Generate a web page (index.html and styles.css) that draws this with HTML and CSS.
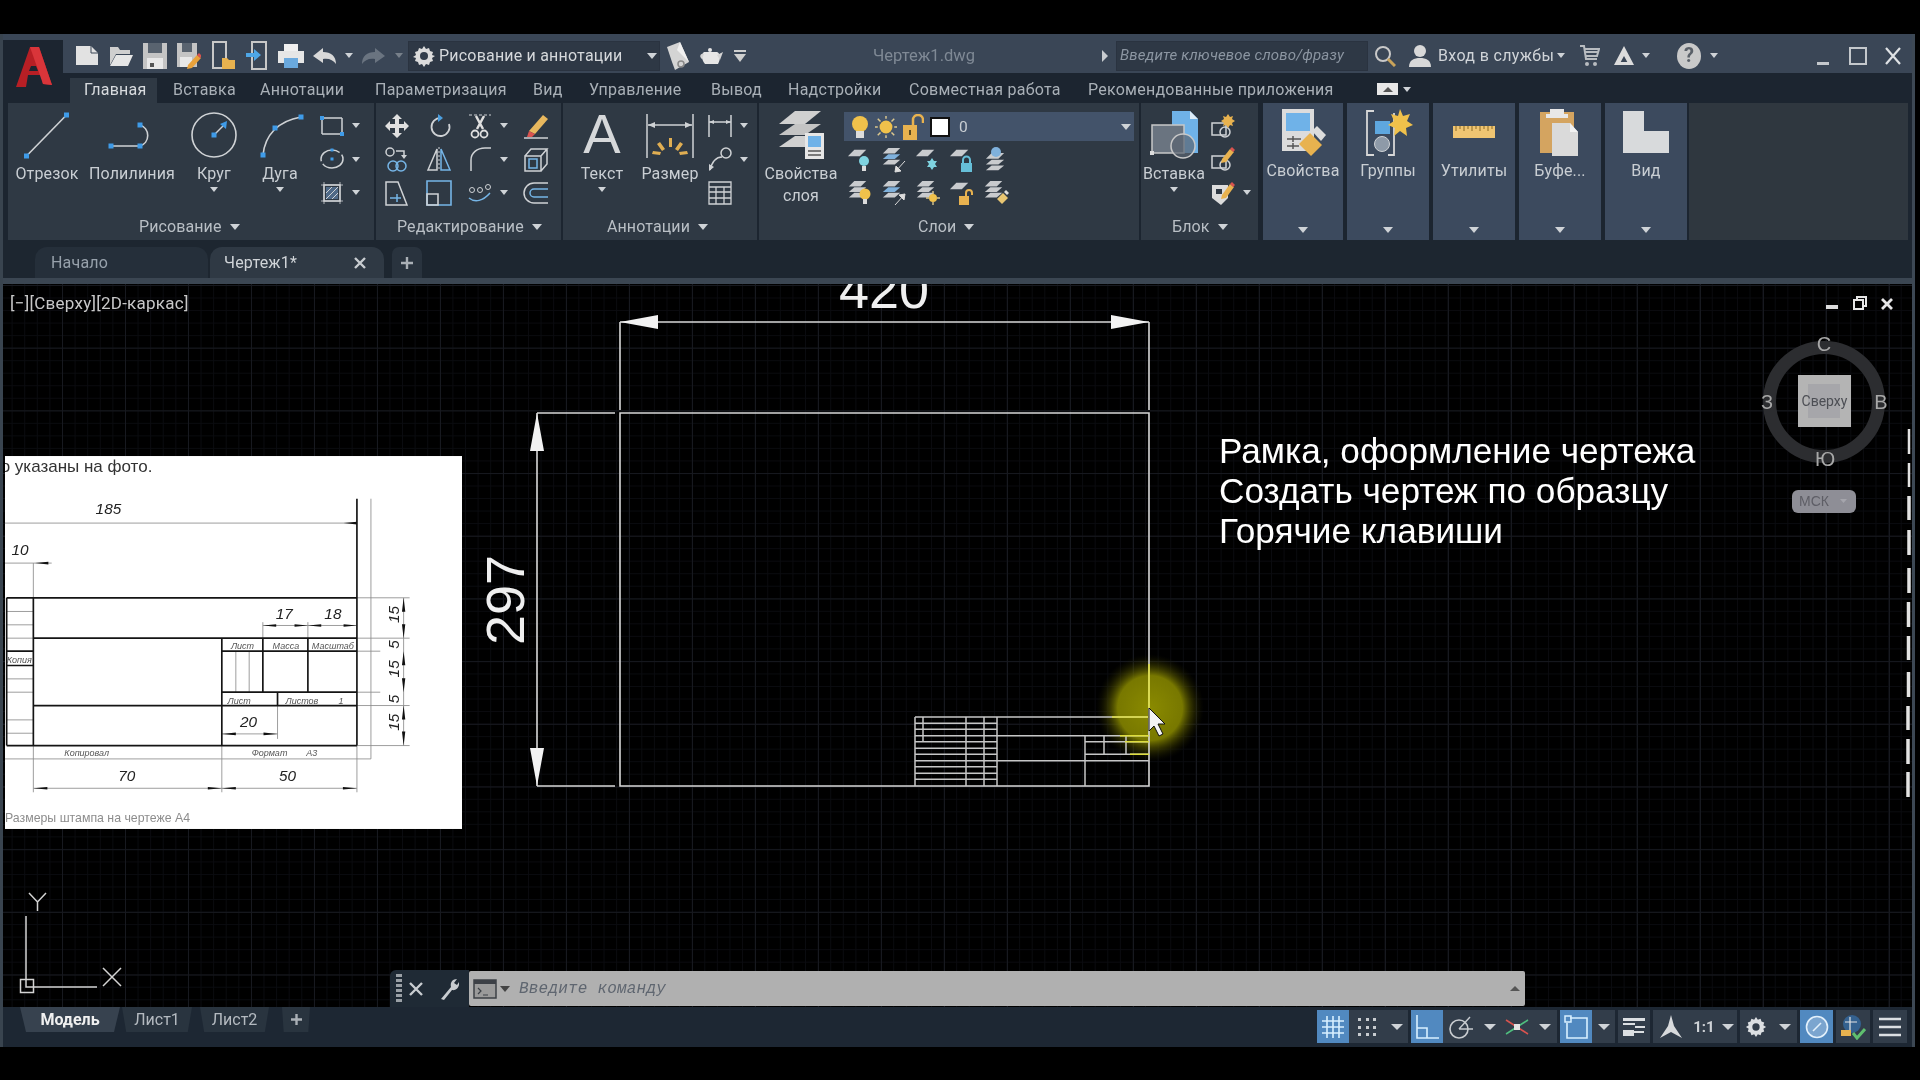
FILE: index.html
```html
<!DOCTYPE html>
<html lang="ru">
<head>
<meta charset="utf-8">
<title>Чертеж1.dwg</title>
<link rel="stylesheet" href="styles.css">
</head>
<body>
<svg class="defs" aria-hidden="true">
  <symbol id="lyr" viewBox="0 0 24 24"><path d="M8 3h13l-7 7H1z" fill="#c9cbce"/></symbol>
  <symbol id="stk" viewBox="0 0 24 24"><path d="M8 1h13l-6 6H2z" fill="#c9cbce"/><path d="M8 8h13l-6 5H2z" fill="#c9cbce"/><path d="M8 14h13l-6 5H2z" fill="#c9cbce"/></symbol>
  <symbol id="stkb" viewBox="0 0 24 24"><path d="M8 1h13l-6 6H2z" fill="#c9cbce"/><path d="M8 8h13l-6 5H2z" fill="#7fb1dc"/><path d="M8 14h13l-6 5H2z" fill="#c9cbce"/></symbol>
</svg>

<div class="bar-black top-gap"></div>
<main class="window">

  <div class="top">
    <div class="logo">
      <svg width="38" height="42" viewBox="0 0 38 42"><path d="M1 41 15 1h9l13 38-9-1-2-9H13l-2 12z" fill="#b71f25"/><path d="M15 1h9l13 38-9-1z" fill="#d9353a"/><path d="M16 20h5l2 5h-9z" fill="#1c2530"/></svg>
    </div>
    <div class="top-right">
      <header class="titlebar">
        <div class="c w34"><svg width="24" height="24" viewBox="0 0 24 24"><path d="M1 2h15l7 7v12H1z" fill="#e2e2e2"/><path d="M16 2v7h7" fill="none" stroke="#3a4656"/></svg></div>
        <div class="c w34"><svg width="26" height="24" viewBox="0 0 26 24"><path d="M2 3h8l2 3h10v4H8L2 21z" fill="#cfcfcf"/><path d="M8 11h17l-5 11H2z" fill="#e6e6e6"/></svg></div>
        <div class="c w34"><svg width="24" height="28" viewBox="0 0 24 28"><path d="M0 1h24v26H0z" fill="#c4c4c4"/><path d="M5 1h14v10H5z" fill="#59636f"/><path d="M4 16h16v11H4z" fill="#e8e8e8"/><path d="M7 21h4v4H7z" fill="#555"/></svg></div>
        <div class="c w34"><svg width="24" height="28" viewBox="0 0 24 28"><path d="M0 1h20v24H0z" fill="#c4c4c4"/><path d="M5 1h10v9H5z" fill="#59636f"/><path d="M3 15h12v10H3z" fill="#e8e8e8"/><path d="M11 23l9-10 4 3-9 10-5 1z" fill="#e9a23b"/><path d="M20 13l2-2 3 3-2 2z" fill="#d9534f"/></svg></div>
        <div class="c w34"><svg width="24" height="30" viewBox="0 0 24 30"><path d="M2 1h13v26H2z" fill="none" stroke="#c8c8c8" stroke-width="2"/><path d="M11 17h5l2 2h6v9H11z" fill="#e8b24f"/></svg></div>
        <div class="c w34"><svg width="24" height="30" viewBox="0 0 24 30"><path d="M7 1h14v27H7z" fill="none" stroke="#c8c8c8" stroke-width="2"/><path d="M1 12h8V8l7 6-7 6v-4H1z" fill="#4ea6e6"/></svg></div>
        <div class="c w34"><svg width="26" height="26" viewBox="0 0 26 26"><path d="M6 1h14v7H6z" fill="#f0f0f0"/><path d="M0 8h26v12H0z" fill="#e6e6e6"/><path d="M6 15h14v10H6z" fill="#6aa9de"/></svg></div>
        <div class="c w34"><svg width="24" height="18" viewBox="0 0 24 18"><path d="M10 1 0 9l10 7v-4c6-1 10 1 13 5 0-8-5-12-13-12z" fill="#d8d8d8"/></svg></div>
        <div class="c w14"><i class="dd dd-s"></i></div>
        <div class="c w34"><svg width="24" height="18" viewBox="0 0 24 18"><path d="M14 1l10 8-10 7v-4C8 11 4 13 1 17c0-8 5-12 13-12z" fill="#6a7480"/></svg></div>
        <div class="c w17"><i class="dd dd-s dim"></i></div>
        <div class="workspace">
          <svg width="24" height="24" viewBox="0 0 24 24"><path d="M12 2l2 3 3-1 1 3 3 1-1 3 3 1-3 2 1 3-3 1-1 3-3-1-2 3-2-3-3 1-1-3-3-1 1-3-3-1 3-2-1-3 3-1 1-3 3 1z" fill="#dcdcdc"/><circle cx="12" cy="12" r="4" fill="#333e4b"/></svg>
          <span class="ws-text">Рисование и аннотации</span>
          <i class="dd ws-dd"></i>
        </div>
        <div class="c w36"><svg width="24" height="30" viewBox="0 0 24 30"><path d="M1 6 14 1l9 20-14 8-3-8z" fill="#d4d4d4"/><path d="M14 1l-3 8 12 12z" fill="#f0f0f0"/><circle cx="15" cy="23" r="3" fill="none" stroke="#888" stroke-width="1.5"/></svg></div>
        <div class="c w30"><svg width="26" height="20" viewBox="0 0 26 20"><path d="M6 6h13c3 1 4 7 1 12H7C3 13 3 8 6 6z" fill="#e6e6e6"/><path d="M19 9l6-3-3 8zM6 8C2 7 1 11 4 13" fill="#d4d4d4"/><circle cx="12" cy="4" r="2" fill="#e6e6e6"/></svg></div>
        <div class="c w28"><svg width="14" height="14" viewBox="0 0 14 14"><path d="M1 1h12v2H1zM1 5h12L7 13z" fill="#cfcfcf"/></svg></div>
        <div class="doc-title">Чертеж1.dwg</div>
        <div class="c w22"><i class="tri-r"></i></div>
        <div class="search">Введите ключевое слово/фразу</div>
        <div class="c w34"><svg width="22" height="22" viewBox="0 0 22 22"><circle cx="9" cy="9" r="7" fill="none" stroke="#c9c9c9" stroke-width="2"/><path d="M14 14l7 7" stroke="#c9a35a" stroke-width="3"/></svg></div>
        <div class="c w36"><svg width="24" height="24" viewBox="0 0 24 24"><circle cx="12" cy="7" r="6" fill="#d8d8d8"/><path d="M1 23c0-7 5-9 11-9s11 2 11 9z" fill="#d8d8d8"/></svg></div>
        <div class="login">Вход в службы</div>
        <div class="c w16"><i class="dd dd-s"></i></div>
        <div class="c w42"><svg width="20" height="22" viewBox="0 0 20 22"><path d="M0 1h4l2 13h11M5 4h14l-2 7H6M5 7h13" fill="none" stroke="#b8bcc0" stroke-width="2"/><circle cx="7" cy="19" r="2" fill="#b8bcc0"/><circle cx="15" cy="19" r="2" fill="#b8bcc0"/></svg></div>
        <div class="c w26"><svg width="22" height="22" viewBox="0 0 22 22"><path d="M11 1 1 20h5l5-9 5 9h5z" fill="#dcdcdc"/><path d="M6 17h10v3H6z" fill="#dcdcdc"/></svg></div>
        <div class="c w18"><i class="dd dd-s"></i></div>
        <div class="c w40 ml14"><svg width="24" height="26" viewBox="0 0 24 26"><ellipse cx="12" cy="13" rx="12" ry="13" fill="#c9c9c9"/><text x="12" y="19" class="help-q">?</text></svg></div>
        <div class="c w10"><i class="dd dd-s"></i></div>
        <div class="win-btns">
          <div class="c w35"><svg width="12" height="20" viewBox="0 0 12 20"><path d="M0 16h12v3H0z" fill="#c4c8cc"/></svg></div>
          <div class="c w35"><svg width="18" height="18" viewBox="0 0 18 18"><path d="M1 1h16v16H1z" fill="none" stroke="#c4c8cc" stroke-width="2"/></svg></div>
          <div class="c w35"><svg width="18" height="18" viewBox="0 0 18 18"><path d="M2 1l14 16M16 1 2 17" stroke="#dfe2e5" stroke-width="2.2"/></svg></div>
        </div>
      </header>
      <nav class="tabrow">
        <span class="rtab active">Главная</span>
        <span class="rtab t87">Вставка</span>
        <span class="rtab t115">Аннотации</span>
        <span class="rtab t158">Параметризация</span>
        <span class="rtab t56">Вид</span>
        <span class="rtab t122">Управление</span>
        <span class="rtab t77">Вывод</span>
        <span class="rtab t121">Надстройки</span>
        <span class="rtab t179">Совместная работа</span>
        <span class="rtab t289">Рекомендованные приложения</span>
        <span class="mini-btn"><i class="tri-u"></i></span>
        <i class="dd dd-s mini-dd"></i>
      </nav>
    </div>
  </div>

  <section class="ribbon">
    <!-- Рисование -->
    <div class="panel p-draw">
      <div class="pbody">
        <div class="lg w72">
          <svg class="ico48" viewBox="0 0 64 48"><path d="M11.500 45 51.500 4" stroke="#cfd2d5" stroke-width="1.600"/><rect x="9" y="42.500" width="5" height="5" fill="#3f9be8"/><rect x="49" y="1.500" width="5" height="5" fill="#3f9be8"/></svg>
          <span class="lbl">Отрезок</span>
        </div>
        <div class="lg w98">
          <svg class="ico48" viewBox="0 0 64 48"><path d="M11 35h29a11 11 0 0 0 0-21" fill="none" stroke="#cfd2d5" stroke-width="1.600"/><rect x="8.500" y="32.500" width="5" height="5" fill="#3f9be8"/><rect x="37.500" y="32.500" width="5" height="5" fill="#3f9be8"/><rect x="37.500" y="11.500" width="5" height="5" fill="#3f9be8"/></svg>
          <span class="lbl">Полилиния</span>
        </div>
        <div class="lg w66">
          <svg class="ico48" viewBox="0 0 64 48"><circle cx="32" cy="24" r="22" fill="none" stroke="#cfd2d5" stroke-width="1.600"/><path d="M32 24 43 13" stroke="#cfd2d5" stroke-width="1.400"/><path d="M45 10l-1 8-6-5z" fill="#3f9be8"/><rect x="29.500" y="21.500" width="5" height="5" fill="#3f9be8"/></svg>
          <span class="lbl">Круг</span><i class="dd dd-s lgdd"></i>
        </div>
        <div class="lg w66">
          <svg class="ico48" viewBox="0 0 64 48"><path d="M15 44C17 24 30 10 53 6" fill="none" stroke="#cfd2d5" stroke-width="1.600"/><rect x="12.500" y="41.500" width="5" height="5" fill="#3f9be8"/><rect x="24.500" y="14.500" width="5" height="5" fill="#3f9be8"/><rect x="50.500" y="3.500" width="5" height="5" fill="#3f9be8"/></svg>
          <span class="lbl">Дуга</span><i class="dd dd-s lgdd"></i>
        </div>
        <div class="scol ml5">
          <div class="srow"><div class="c w28"><svg class="ico26" viewBox="0 0 26 26"><path d="M3 5h20M3 5v16M23 5v16M3 21h20" stroke="#cfd2d5" stroke-width="1.500" fill="none"/><path d="M1 3h4v4H1zM21 19h4v4h-4z" fill="#3f9be8"/></svg></div><div class="c w20"><i class="dd dd-s"></i></div></div>
          <div class="srow"><div class="c w28"><svg class="ico26" viewBox="0 0 26 26"><ellipse cx="13" cy="13" rx="11" ry="9" fill="none" stroke="#cfd2d5" stroke-width="1.500" stroke-dasharray="26 3"/><rect x="11.500" y="11.500" width="3" height="3" fill="#3f9be8"/><rect x="11.500" y="2.500" width="3" height="3" fill="#3f9be8"/></svg></div><div class="c w20"><i class="dd dd-s"></i></div></div>
          <div class="srow"><div class="c w28"><svg class="ico26" viewBox="0 0 26 26"><path d="M5 5h16v16H5z" fill="none" stroke="#cfd2d5" stroke-width="1.500"/><path d="M7 7h12v12H7z" fill="#4f6987"/><path d="M7 13l6-6M7 19 19 7M13 19l6-6" stroke="#cfd2d5"/><path d="M2 5h22M2 21h22M5 2v22M21 2v22" stroke="#cfd2d5" stroke-width=".8"/></svg></div><div class="c w20"><i class="dd dd-s"></i></div></div>
        </div>
      </div>
      <div class="pfoot f-draw">Рисование<i class="dd"></i></div>
    </div>

    <!-- Редактирование -->
    <div class="panel p-edit">
      <div class="pbody edit-grid">
        <div class="c"><svg class="ico26" viewBox="0 0 26 26"><path d="M13 1l5 5h-3v5h5V8l5 5-5 5v-3h-5v5h3l-5 5-5-5h3v-5H6v3l-5-5 5-5v3h5V6H8z" fill="#e0e0e0"/></svg></div>
        <div class="c"><svg class="ico26" viewBox="0 0 26 26"><path d="M15 5a9 9 0 1 0 8 6" fill="none" stroke="#cfd2d5" stroke-width="1.800"/><path d="M12 1l5 4-5 4z" fill="#4c9fdf"/></svg></div>
        <div class="c"><svg class="ico26" viewBox="0 0 26 26"><path d="M2 2h22" stroke="#cfd2d5" stroke-dasharray="3 2"/><path d="M9 3l7 13M17 3l-7 13" stroke="#e0e0e0" stroke-width="2.500"/><circle cx="8" cy="21" r="3.500" fill="none" stroke="#e0e0e0" stroke-width="1.800"/><circle cx="17" cy="21" r="3.500" fill="none" stroke="#e0e0e0" stroke-width="1.800"/></svg></div>
        <div class="c"><i class="dd dd-s"></i></div>
        <div class="c e5"><svg class="ico26" viewBox="0 0 26 26"><path d="M6 18 20 2l5 4-13 15z" fill="#e8b85e"/><path d="M6 18l6 3-3 3H4z" fill="#d9534f"/><path d="M1 25h24" stroke="#cfd2d5" stroke-width="1.500"/></svg></div>

        <div class="c"><svg class="ico26" viewBox="0 0 26 26"><circle cx="6" cy="6" r="4" fill="none" stroke="#cfd2d5" stroke-width="1.500"/><path d="M12 5h8v5" fill="none" stroke="#cfd2d5" stroke-width="1.500"/><path d="M17 9h6l-3 4z" fill="#cfd2d5"/><circle cx="9" cy="20" r="5" fill="none" stroke="#76b5e6" stroke-width="1.500"/><circle cx="17" cy="20" r="5" fill="none" stroke="#76b5e6" stroke-width="1.500"/></svg></div>
        <div class="c"><svg class="ico26" viewBox="0 0 26 26"><path d="M11 3v21H2z" fill="none" stroke="#cfd2d5" stroke-width="1.500"/><path d="M15 3v21h9z" fill="none" stroke="#76b5e6" stroke-width="1.500"/><path d="M13 1v24" stroke="#cfd2d5" stroke-dasharray="2 2"/></svg></div>
        <div class="c"><svg class="ico26" viewBox="0 0 26 26"><path d="M4 25V14C4 7 10 2 18 2h6" fill="none" stroke="#cfd2d5" stroke-width="1.500"/></svg></div>
        <div class="c"><i class="dd dd-s"></i></div>
        <div class="c e5"><svg class="ico26" viewBox="0 0 26 26"><path d="M2 10h16v15H2zM2 10l6-7h16l-6 7M18 25l6-7V3" fill="none" stroke="#cfd2d5" stroke-width="1.500"/><path d="M6 13h8v9H6z" fill="none" stroke="#76b5e6" stroke-width="1.500"/></svg></div>

        <div class="c"><svg class="ico26" viewBox="0 0 26 26"><path d="M2 2h12l9 23H2z" fill="none" stroke="#cfd2d5" stroke-width="1.500"/><path d="M6 18h11M13 14v8" stroke="#76b5e6" stroke-width="1.500"/></svg></div>
        <div class="c"><svg class="ico26" viewBox="0 0 26 26"><path d="M1 1h24v24H1z" fill="none" stroke="#76b5e6" stroke-width="1.600"/><path d="M1 14h11v11H1z" fill="none" stroke="#cfd2d5" stroke-width="1.600"/></svg></div>
        <div class="c"><svg class="ico26" viewBox="0 0 26 26"><circle cx="5" cy="10" r="2.500" fill="none" stroke="#cfd2d5"/><circle cx="13" cy="10" r="2.500" fill="none" stroke="#cfd2d5"/><circle cx="21" cy="7" r="2.500" fill="none" stroke="#cfd2d5"/><path d="M2 18c6 5 14 3 21-5" fill="none" stroke="#76b5e6" stroke-width="1.500"/></svg></div>
        <div class="c"><i class="dd dd-s"></i></div>
        <div class="c e5"><svg class="ico26" viewBox="0 0 26 26"><path d="M25 3H11a10 10 0 0 0 0 20h14" fill="none" stroke="#cfd2d5" stroke-width="1.500"/><path d="M25 9H11a4 4 0 0 0 0 8h14" fill="none" stroke="#76b5e6" stroke-width="1.500"/></svg></div>
      </div>
      <div class="pfoot f-edit">Редактирование<i class="dd"></i></div>
    </div>

    <!-- Аннотации -->
    <div class="panel p-anno">
      <div class="pbody">
        <div class="lg w78">
          <span class="big-a">A</span>
          <span class="lbl">Текст</span><i class="dd dd-s lgdd"></i>
        </div>
        <div class="lg w58">
          <svg class="ico48" viewBox="0 0 48 48"><path d="M1 3v44M47 3v44" stroke="#cfd2d5" stroke-width="1.500"/><path d="M2 14h44" stroke="#cfd2d5" stroke-width="1.500"/><path d="M2 14l7-3v6zM46 14l-7-3v6z" fill="#cfd2d5"/><path d="M23 27h3v9h-3zM11 33l3-2 5 7-3 2zM37 33l-3-2-5 7 3 2zM6 43l1-3 8 1-1 3zM42 43l-1-3-8 1 1 3z" fill="#e0ae52"/></svg>
          <span class="lbl">Размер</span>
        </div>
        <div class="scol ml7">
          <div class="srow"><div class="c w28"><svg class="ico26" viewBox="0 0 26 26"><path d="M2 2v22M24 2v22M2 9h22" stroke="#cfd2d5" stroke-width="1.500"/><path d="M2 9l5-2v4zM24 9l-5-2v4z" fill="#cfd2d5"/></svg></div><div class="c w20"><i class="dd dd-s"></i></div></div>
          <div class="srow"><div class="c w28"><svg class="ico26" viewBox="0 0 26 26"><circle cx="19" cy="7" r="5" fill="none" stroke="#cfd2d5" stroke-width="1.500"/><path d="M15 11C9 11 5 16 3 24" fill="none" stroke="#cfd2d5" stroke-width="1.500"/><path d="M2 25l0-7 5 3z" fill="#cfd2d5"/></svg></div><div class="c w20"><i class="dd dd-s"></i></div></div>
          <div class="srow"><div class="c w28"><svg class="ico26" viewBox="0 0 26 26"><path d="M2 2h22v22H2zM2 7h22M2 12h22M2 18h22M9 7v17M17 7v17" fill="none" stroke="#cfd2d5" stroke-width="1.300"/></svg></div></div>
        </div>
      </div>
      <div class="pfoot f-anno">Аннотации<i class="dd"></i></div>
    </div>

    <!-- Слои -->
    <div class="panel p-layers">
      <div class="pbody">
        <div class="lg w84">
          <svg class="ico48" viewBox="0 0 48 48"><path d="M18 0h26L28 13H2z" fill="#d0d0d0"/><path d="M18 13h26L28 24H2z" fill="#c4c4c4"/><path d="M18 25h26L28 36H2z" fill="#d0d0d0"/><path d="M28 22h19v26H28z" fill="#e6e6e6"/><path d="M31 25h13v11H31z" fill="#6fb2e8"/><path d="M31 40h13M31 44h13" stroke="#555" stroke-width="1.500"/></svg>
          <span class="lbl two">Свойства<br>слоя</span>
        </div>
        <div class="layer-col">
          <div class="layer-dd">
            <svg class="ldi" viewBox="0 0 18 24"><circle cx="9" cy="9" r="8" fill="#f0c14b"/><path d="M5 16h8v7H5z" fill="#dcdcdc"/></svg>
            <svg class="ldi2" viewBox="0 0 24 24"><circle cx="12" cy="12" r="7" fill="#f0c14b"/><path d="M12 0v3M12 21v3M0 12h3M21 12h3M3 3l3 3M18 18l3 3M21 3l-3 3M3 21l3-3" stroke="#dcc88f" stroke-width="1.600"/></svg>
            <svg class="ldi3" viewBox="0 0 22 26"><path d="M1 11h14v15H1z" fill="#e8b24f"/><path d="M11 11V6a5 5 0 0 1 10 0v3" fill="none" stroke="#e8b24f" stroke-width="2.500"/><rect x="7" y="16" width="2" height="5" fill="#5b4a20"/></svg>
            <span class="swatch"></span>
            <span class="ld-text">0</span>
            <i class="dd ld-arrow"></i>
          </div>
          <div class="lrow">
            <div class="c w34"><svg class="ico26" viewBox="0 0 26 26"><use href="#lyr" width="22" height="22"/><circle cx="17" cy="14" r="5" fill="#7fd3e0"/><path d="M15 19h4v5h-4z" fill="#dcdcdc"/></svg></div>
            <div class="c w34"><svg class="ico26" viewBox="0 0 26 26"><use href="#stkb" width="22" height="22"/><path d="M24 14 14 25M14 25l1-6 5 5z" fill="#dcdcdc" stroke="#dcdcdc"/></svg></div>
            <div class="c w34"><svg class="ico26" viewBox="0 0 26 26"><use href="#lyr" width="22" height="22"/><path d="M17 11l2 3h3l-2 3 2 3h-3l-2 3-2-3h-3l2-3-2-3h3z" fill="#7fd3e0"/></svg></div>
            <div class="c w34"><svg class="ico26" viewBox="0 0 26 26"><use href="#lyr" width="22" height="22"/><path d="M12 16h11v9H12z" fill="#66bfd8"/><path d="M14 16v-3a3.500 3.500 0 0 1 7 0v3" fill="none" stroke="#66bfd8" stroke-width="2"/></svg></div>
            <div class="c w34"><svg class="ico26" viewBox="0 0 26 26"><use href="#stk" x="1" y="5" width="23" height="23"/><circle cx="13" cy="5" r="5" fill="#7fb1dc"/></svg></div>
          </div>
          <div class="lrow">
            <div class="c w34"><svg class="ico26" viewBox="0 0 26 26"><use href="#stk" width="22" height="22"/><circle cx="18" cy="14" r="5.500" fill="#f0c14b"/><path d="M16 19h4v5h-4z" fill="#dcdcdc"/></svg></div>
            <div class="c w34"><svg class="ico26" viewBox="0 0 26 26"><use href="#stkb" width="22" height="22"/><path d="M14 25 24 14M24 14l-1 6-5-5z" fill="#dcdcdc" stroke="#dcdcdc"/></svg></div>
            <div class="c w34"><svg class="ico26" viewBox="0 0 26 26"><use href="#stk" width="22" height="22"/><circle cx="18" cy="18" r="4" fill="#f0c14b"/><path d="M18 11v3M18 22v3M11 18h3M22 18h3" stroke="#dcc88f" stroke-width="1.400"/></svg></div>
            <div class="c w34"><svg class="ico26" viewBox="0 0 26 26"><use href="#lyr" width="22" height="22"/><path d="M10 16h10v9H10z" fill="#e8b24f"/><path d="M17 16v-3a3 3 0 0 1 6 0v2" fill="none" stroke="#e8b24f" stroke-width="2"/></svg></div>
            <div class="c w34"><svg class="ico26" viewBox="0 0 26 26"><use href="#stk" width="22" height="22"/><path d="M14 19l6-6 5 5-6 6z" fill="#e8c672"/><path d="M21 12l2-2 3 3-2 2z" fill="#dcdcdc"/></svg></div>
          </div>
        </div>
      </div>
      <div class="pfoot f-layers">Слои<i class="dd"></i></div>
    </div>

    <!-- Блок -->
    <div class="panel p-block">
      <div class="pbody">
        <div class="lg w66">
          <svg class="ico48" viewBox="0 0 48 48"><path d="M22 0h18l8 8v34H22z" fill="#6fb2e8"/><path d="M40 0v8h8" fill="#dcecf8"/><path d="M2 14h32v28H2z" fill="#6a7480" stroke="#c8c8c8" stroke-width="1.500"/><circle cx="33" cy="35" r="12" fill="#5a6470" fill-opacity=".7" stroke="#c8c8c8" stroke-width="1.500"/><rect y="40" width="4" height="4" fill="#dcdcdc"/></svg>
          <span class="lbl">Вставка</span><i class="dd dd-s lgdd"></i>
        </div>
        <div class="scol ml2">
          <div class="srow"><div class="c w28"><svg class="ico26" viewBox="0 0 26 26"><path d="M2 10h14v12H2z" fill="none" stroke="#cfd2d5" stroke-width="1.500"/><circle cx="15" cy="19" r="5" fill="none" stroke="#cfd2d5" stroke-width="1.500"/><path d="M18 1l2 3 3-1-1 3 3 2-3 2 1 3-3-1-2 3-2-3-3 1 1-3-3-2 3-2-1-3 3 1z" fill="#e8b24f"/></svg></div></div>
          <div class="srow"><div class="c w28"><svg class="ico26" viewBox="0 0 26 26"><path d="M2 10h14v12H2z" fill="none" stroke="#cfd2d5" stroke-width="1.500"/><circle cx="15" cy="19" r="5" fill="none" stroke="#cfd2d5" stroke-width="1.500"/><path d="M12 13l8-10 4 3-8 10-5 1z" fill="#e8b24f"/><path d="M20 3l2-2 3 3-2 2z" fill="#d9534f"/></svg></div></div>
          <div class="srow"><div class="c w28"><svg class="ico26" viewBox="0 0 26 26"><path d="M2 5h16v13l-7 7-9-7z" fill="#dcdcdc"/><path d="M6 9h6v5H6z" fill="#2f3944"/><path d="M12 15l8-11 4 3-8 11-5 1z" fill="#e8b24f"/><path d="M20 4l2-2 3 3-2 2z" fill="#d9534f"/></svg></div><div class="c w20"><i class="dd dd-s"></i></div></div>
        </div>
      </div>
      <div class="pfoot f-block">Блок<i class="dd"></i></div>
    </div>

    <!-- Свернутые панели -->
    <div class="cpanel w80 ml3">
      <svg class="ico48" viewBox="0 0 48 48"><path d="M3 1h32v42H3z" fill="#dcdcdc"/><path d="M7 5h24v18H7z" fill="#6fb2e8"/><path d="M8 31h14M8 38h12M14 28v6M14 35v6" stroke="#555" stroke-width="1.500"/><path d="M20 36l11-11 12 12-11 11z" fill="#e8b24f"/><path d="M33 23l5-5 9 9-5 6z" fill="#dcdcdc"/></svg>
      <span class="lbl">Свойства</span><i class="dd cdd"></i>
    </div>
    <div class="cpanel w82 ml2">
      <svg class="ico48" viewBox="0 0 48 48"><path d="M10 3H3v44h7M30 5v42h-6" fill="none" stroke="#d8d8d8" stroke-width="1.800"/><rect x="11" y="13" width="15" height="13" fill="#5ea7df"/><circle cx="18" cy="36" r="7.500" fill="#8e9aa8" stroke="#cfd2d5"/><path d="M36 1l3 7 7-2-3 7 6 4-7 3 1 8-7-5-6 5 1-8-7-3 6-4-3-7 7 2z" fill="#f0c14b"/></svg>
      <span class="lbl">Группы</span><i class="dd cdd"></i>
    </div>
    <div class="cpanel w82 ml2">
      <svg class="ico48" viewBox="0 0 48 48"><path d="M3 18h42v12H3z" fill="#f0c572"/><path d="M6 18v5M10 18v3M14 18v5M18 18v3M22 18v5M26 18v3M30 18v5M34 18v3M38 18v5M42 18v3" stroke="#8a6a25"/></svg>
      <span class="lbl">Утилиты</span><i class="dd cdd"></i>
    </div>
    <div class="cpanel w82 ml2">
      <svg class="ico48" viewBox="0 0 48 48"><path d="M4 4h34v41H4z" fill="#d4a460"/><path d="M14 1h14v5h4v4H10V6h4z" fill="#e8e8e8"/><path d="M16 15h18l8 9v24H16z" fill="#dadada"/><path d="M34 15v9h8" fill="#f2f2f2"/></svg>
      <span class="lbl">Буфе...</span><i class="dd cdd"></i>
    </div>
    <div class="cpanel w82 ml2">
      <svg class="ico48" viewBox="0 0 48 48"><path d="M1 3h21v20h25v22H1z" fill="#d8dadc"/></svg>
      <span class="lbl">Вид</span><i class="dd cdd"></i>
    </div>
    <div class="blank-panel"></div>
  </section>

  <div class="doctabs">
    <div class="dtab home">Начало</div>
    <div class="dtab cur"><span>Чертеж1*</span><svg class="dx" width="12" height="12" viewBox="0 0 12 12"><path d="M1 1l10 10M11 1 1 11" stroke="#c8ccd0" stroke-width="2.400"/></svg></div>
    <div class="dtab plus"><svg width="12" height="12" viewBox="0 0 12 12"><path d="M6 0v12M0 6h12" stroke="#aab0b6" stroke-width="2.400"/></svg></div>
  </div>
  <div class="sep"></div>

  <section class="canvas">
    <div class="vp-label">[−][Сверху][2D-каркас]</div>

    <svg class="draw" viewBox="3 284 1909 723" width="1909" height="723">
      <defs>
        <radialGradient id="glow"><stop offset="0" stop-color="#8a8a00"/><stop offset=".6" stop-color="#787800"/><stop offset="1" stop-color="#1a1a00" stop-opacity="0"/></radialGradient>
      </defs>
      <circle cx="1150" cy="708" r="54" fill="url(#glow)"/>
      <text x="884" y="308" class="dim-text" text-anchor="middle">420</text>
      <text class="dim-text" text-anchor="middle" transform="translate(524 600) rotate(-90)">297</text>
      <g class="ln">
        <path d="M620 322H1149M620 322V410M1149 322V410"/>
        <path d="M537 413V786M537 413H615M537 786H615"/>
        <path d="M620 413H1149V786H620Z"/>
      </g>
      <path d="M620 322l38-7v14zM1149 322l-38-7v14zM537 413l-7 38h14zM537 786l-7-38h14z" fill="#f2f2f2"/>
      <g class="tb">
        <path d="M915 717H1149M915 723.300H997M915 729.300H997M915 735.700H1149M915 741.700H997M915 748.300H997M915 754.300H997M915 760.700H1149M915 766.700H997M915 773.300H997M915 779.300H997"/>
        <path d="M915 717V786M923 717V741.700M966 717V786M984 717V786M997 717V786"/>
        <path d="M1085 735.700V786M1085 741.700H1149M1085 754.300H1149M1104 735.700V754.300M1126 735.700V754.300"/>
      </g>
      <path d="M1149 664V708M1112 717H1149M1120 735.700H1149M1125 741.700H1149M1130 754.300H1149" class="yl"/>
      <path d="M1149 708v23l5-5 5 10 4-2-5-10h7z" fill="#f4f4f4" stroke="#111" stroke-width="1"/>

      <!-- ПСК -->
      <g class="ucs">
        <path d="M26 916V987H97M20.500 979.500h13v13h-13z"/>
        <path d="M29 893l8.500 9 8.500-9M37.500 902v9M103 968l18 18M121 968l-18 18"/>
      </g>

      <!-- Управление видом -->
      <path d="M1826 307h12" stroke="#dcdcdc" stroke-width="4"/>
      <path d="M1854 300h9v9h-9zM1857 300v-3h9v9h-3" fill="none" stroke="#e6e6e6" stroke-width="2"/>
      <path d="M1882 299l10 10M1892 299l-10 10" stroke="#e6e6e6" stroke-width="2.800"/>

      <!-- Видовой куб -->
      <circle cx="1824" cy="402" r="54.500" fill="none" stroke="#2c2d30" stroke-width="13"/>
      <rect x="1798" y="375" width="53" height="52" fill="#b4b4b4"/>
      <rect x="1808" y="384" width="32" height="34" fill="#a6a6aa"/>
      <text x="1824.500" y="406" class="vc-top" text-anchor="middle">Сверху</text>
      <text x="1824" y="351" class="vc-dir" text-anchor="middle">С</text>
      <text x="1881" y="409" class="vc-dir" text-anchor="middle">В</text>
      <text x="1825" y="466" class="vc-dir" text-anchor="middle">Ю</text>
      <text x="1767" y="409" class="vc-dir" text-anchor="middle">З</text>
      <rect x="1792" y="490" width="64" height="23" rx="6" fill="#8e8e96"/>
      <text x="1814" y="506" class="ucs-text" text-anchor="middle">МСК</text>
      <path d="M1840 499h7l-3.500 4z" fill="#a5a5ac"/>

      <!-- Шкала -->
      <path d="M1909 429v25M1909 463v24" stroke="#e4e4e4" stroke-width="2.500"/>
      <path d="M1909 496v24M1909 530v25M1909 568v25M1908.500 602v25M1908.500 636v24M1908.500 672v25M1908 706v24M1908 739v25M1908 772v25" stroke="#e4e4e4" stroke-width="3.500"/>
    </svg>

    <figure class="photo">
      <svg viewBox="15 47 1370 1118" width="457" height="373">
        <rect x="15" y="47" width="1370" height="1118" fill="#fff"/>
        <text x="2" y="94" class="ph-head">о указаны на фото.</text>
        <g class="ph-thin">
          <path d="M1112 175V955M15 955H1112M15 248H1070M15 368H155M100 368V472"/>
          <path d="M20 513H100M20 553H100M20 593H100M20 715H100M20 755H100M20 838H100M20 878H100"/>
          <path d="M707 632V755M747 632V755M1070 472H1228M1070 593H1228M1070 632H1140M1070 755H1140M1070 795H1228M1070 915H1228M1210 472V915"/>
          <path d="M788 555H1070M788 545V593M923 545V593M832 795V895M665 880H832M100 915V1055M665 915V1055M1070 915V1055M100 1043H1070"/>
        </g>
        <path d="M1030 248l40-4v8zM105 368l40-4v8zM788 555l40-4v8zM923 555l-40-4v8zM923 555l40-4v8zM1070 555l-40-4v8zM665 880l42-4v8zM832 880l-42-4v8zM100 1043l42-4v8zM665 1043l-42-4v8zM665 1043l42-4v8zM1070 1043l-42-4v8zM1210 472l-5 42h10zM1210 593l-5-42h10zM1210 632l-5 42h10zM1210 755l-5-42h10zM1210 795l-5 42h10zM1210 915l-5-42h10z" fill="#111"/>
        <g class="ph-thick">
          <path d="M1070 175V915M100 472V915M20 472V915M20 472H1070M100 593H1070M100 795H1070M20 915H1070M665 593V915M665 632H1070M665 755H1070M788 593V755M923 593V755M832 755V795M20 632H100M20 675H100"/>
        </g>
        <g class="ph-num">
          <text x="325" y="222">185</text><text x="60" y="345">10</text><text x="852" y="535">17</text><text x="998" y="535">18</text>
          <text x="745" y="858">20</text><text x="380" y="1022">70</text><text x="862" y="1022">50</text>
          <text transform="translate(1195 522) rotate(-90)">15</text><text transform="translate(1195 612) rotate(-90)">5</text><text transform="translate(1195 685) rotate(-90)">15</text><text transform="translate(1195 775) rotate(-90)">5</text><text transform="translate(1195 845) rotate(-90)">15</text>
        </g>
        <g class="ph-small">
          <text x="727" y="625">Лист</text><text x="857" y="625">Масса</text><text x="998" y="625">Масштаб</text>
          <text x="717" y="790">Лист</text><text x="905" y="790">Листов</text><text x="1022" y="790">1</text>
          <text x="58" y="666">Копия</text><text x="260" y="947">Копировал</text><text x="808" y="947">Формат</text><text x="935" y="947">А3</text>
        </g>
        <text x="15" y="1145" class="ph-foot">Размеры штампа на чертеже А4</text>
      </svg>
    </figure>

    <div class="notes">
      <p>Рамка, оформление чертежа</p>
      <p>Создать чертеж по образцу</p>
      <p>Горячие клавиши</p>
    </div>

    <div class="cmdline">
      <div class="cmd-tools">
        <span class="grip"></span>
        <svg width="14" height="14" viewBox="0 0 14 14"><path d="M1 1l12 12M13 1 1 13" stroke="#c8ccd0" stroke-width="2.400"/></svg>
        <svg class="wrench" width="20" height="22" viewBox="0 0 20 22"><path d="M2 21 12 9c-1-4 1-8 6-8l-3 4 3 2 2-3c1 5-3 9-7 8L5 22z" fill="#c8ccd0"/></svg>
      </div>
      <div class="cmd-input">
        <svg width="24" height="20" viewBox="0 0 24 20"><path d="M1 1h22v18H1z" fill="#9a9a9a" stroke="#3c4046" stroke-width="1.500"/><path d="M1 1h22v4H1z" fill="#3c4046"/><path d="M5 9l3 3-3 3M10 16h5" fill="none" stroke="#3c4046" stroke-width="1.200"/></svg>
        <i class="dd cmd-dd"></i>
        <span class="cmd-ph">Введите команду</span>
        <i class="tri-u cmd-up"></i>
      </div>
    </div>
  </section>

  <footer class="status">
    <div class="ltab l-model">Модель</div>
    <div class="ltab l-1">Лист1</div>
    <div class="ltab l-2">Лист2</div>
    <div class="ltab l-plus"><svg width="11" height="11" viewBox="0 0 11 11"><path d="M5.500 0v11M0 5.500h11" stroke="#aab0b6" stroke-width="2.400"/></svg></div>
    <div class="st-right">
      <div class="sg">
        <div class="c w32 on"><svg width="24" height="24" viewBox="0 0 24 24"><path d="M6 1v22M12 1v22M18 1v22M1 6h22M1 12h22M1 18h22" stroke="#d8f0ff" stroke-width="1.600"/></svg></div>
        <div class="c w36"><svg width="20" height="20" viewBox="0 0 20 20"><g fill="#c8ccd0"><rect x="1" y="1" width="3" height="3"/><rect x="9" y="1" width="3" height="3"/><rect x="16" y="1" width="3" height="3"/><rect x="1" y="9" width="3" height="3"/><rect x="9" y="9" width="3" height="3"/><rect x="16" y="9" width="3" height="3"/><rect x="1" y="16" width="3" height="3"/><rect x="9" y="16" width="3" height="3"/><rect x="16" y="16" width="3" height="3"/></g></svg></div>
        <div class="c w23"><i class="dd"></i></div>
      </div>
      <div class="sg">
        <div class="c w32 on"><svg width="24" height="26" viewBox="0 0 24 26"><path d="M2 1v23h22M2 14h10v10" fill="none" stroke="#d8f0ff" stroke-width="1.600"/></svg></div>
        <div class="c w36"><svg width="24" height="24" viewBox="0 0 24 24"><circle cx="10" cy="14" r="9" fill="none" stroke="#c8ccd0" stroke-width="1.600"/><path d="M10 14H24M10 14 21 2" stroke="#c8ccd0" stroke-width="1.400"/></svg></div>
        <div class="c w22"><i class="dd"></i></div>
        <div class="c w32"><svg width="24" height="18" viewBox="0 0 24 18"><path d="M1 2l22 14" stroke="#d9534f" stroke-width="1.500"/><path d="M1 16 23 2" stroke="#4fbf7f" stroke-width="1.500"/><rect x="9" y="6" width="6" height="6" fill="#e4e4e4"/></svg></div>
        <div class="c w24"><i class="dd"></i></div>
      </div>
      <div class="sg">
        <div class="c w32 on"><svg width="24" height="24" viewBox="0 0 24 24"><path d="M6 3h17v20H3V8" fill="none" stroke="#d8f0ff" stroke-width="1.600"/><rect x="1" y="1" width="6" height="6" fill="none" stroke="#d8f0ff" stroke-width="1.500"/></svg></div>
        <div class="c w23"><i class="dd"></i></div>
      </div>
      <div class="sg">
        <div class="c w32"><svg width="24" height="20" viewBox="0 0 24 20"><path d="M1 1h22v3H1zM1 8h12V6H1zM13 9h10v2H13zM1 13h11v6H1zM12 14h10v2H12z" fill="#dcdfe2"/></svg></div>
      </div>
      <div class="sg">
        <div class="c w36"><svg width="22" height="24" viewBox="0 0 22 24"><path d="M11 0l3 11 8 12-11-6-11 6 8-12z" fill="#d8dadc"/></svg></div>
        <div class="c w30 ratio">1:1</div>
        <div class="c w18"><i class="dd"></i></div>
      </div>
      <div class="sg">
        <div class="c w32"><svg width="22" height="22" viewBox="0 0 24 24"><path d="M12 1l2 3 3-1 1 3 3 1-1 3 3 2-3 2 1 3-3 1-1 3-3-1-2 3-2-3-3 1-1-3-3-1 1-3-3-2 3-2-1-3 3-1 1-3 3 1z" fill="#dcdfe2"/><circle cx="12" cy="12" r="4" fill="#323d4a"/></svg></div>
        <div class="c w25"><i class="dd"></i></div>
      </div>
      <div class="sg on"><div class="c w33"><svg width="24" height="24" viewBox="0 0 24 24"><circle cx="12" cy="12" r="10.500" fill="#7ba5cf" stroke="#e2f0fb" stroke-width="1.600"/><path d="M8 16l8-8" stroke="#e2f0fb" stroke-width="1.600"/></svg></div></div>
      <div class="sg"><div class="c w34"><svg width="26" height="26" viewBox="0 0 26 26"><circle cx="12" cy="10" r="9" fill="#34618f"/><path d="M10 3v14M5 8h12" stroke="#e4e4e4" stroke-width="1.200"/><path d="M1 16h10v6H1z" fill="#e8b24f"/><path d="M13 19l4 5 8-9" fill="none" stroke="#5fbf6f" stroke-width="3"/></svg></div></div>
      <div class="sg"><div class="c w34"><svg width="24" height="20" viewBox="0 0 24 20"><path d="M1 2h22M1 10h22M1 18h22" stroke="#dcdfe2" stroke-width="2.600"/></svg></div></div>
    </div>
  </footer>
</main>
<div class="bar-black bottom-gap"></div>
</body>
</html>
```
FILE: styles.css
```css
* { box-sizing: border-box; }
html, body { margin: 0; padding: 0; }
body {
  width: 1920px; height: 1080px; overflow: hidden; background: #000;
  display: flex; flex-direction: column;
  font-family: Roboto, "Liberation Sans", sans-serif; color: #c4c9ce;
  filter: blur(.5px);
}
p, figure { margin: 0; }
.defs { width: 0; height: 0; position: absolute; }
.bar-black { background: #000; flex: none; }
.top-gap { height: 34px; }
.bottom-gap { height: 33px; }
.window {
  width: 1915px; height: 1013px; flex: none; display: flex; flex-direction: column;
  border-left: 3px solid #39444f; border-right: 3px solid #3d4854; background: #1d2630;
}

/* helpers */
.c { display: flex; align-items: center; justify-content: center; flex: none; }
.w10{width:10px}.w14{width:14px}.w16{width:16px}.w17{width:17px}.w18{width:18px}.w20{width:20px}.w22{width:22px}.w23{width:23px}.w24{width:24px}.w25{width:25px}.w26{width:26px}.w28{width:28px}.w30{width:30px}.w32{width:32px}.w33{width:33px}.w34{width:34px}.w35{width:35px}.w36{width:36px}.w40{width:40px}.w42{width:42px}
.w58{width:58px}.w66{width:66px}.w72{width:72px}.w78{width:78px}.w80{width:80px}.w82{width:82px}.w84{width:84px}.w98{width:98px}
.ml2{margin-left:2px}.ml3{margin-left:3px}.ml5{margin-left:5px}.ml7{margin-left:7px}.ml14{margin-left:14px}
.dd { display: inline-block; width: 0; height: 0; border-left: 6px solid transparent; border-right: 6px solid transparent; border-top: 6px solid #cfd3d7; }
.dd-s { border-left-width: 4px; border-right-width: 4px; border-top-width: 5px; }
.dd.dim { border-top-color: #77808a; }
.tri-r { width: 0; height: 0; border-top: 6px solid transparent; border-bottom: 6px solid transparent; border-left: 6px solid #c8ccd0; }
.tri-u { display: inline-block; width: 0; height: 0; border-left: 5px solid transparent; border-right: 5px solid transparent; border-bottom: 5px solid #555; }

/* title */
.top { display: flex; height: 69px; background: #3a4656; flex: none; }
.logo { width: 60px; height: 63px; margin-top: 6px; background: #1c2530; display: flex; justify-content: center; padding: 6px 0 0 2px; flex: none; }
.top-right { flex: 1; display: flex; flex-direction: column; min-width: 0; }
.titlebar { height: 39px; padding: 4px 0 0 7px; display: flex; align-items: center; background: #3a4656; }
.workspace { margin-left: 1px; width: 252px; height: 30px; flex: none; background: #2e3845; border: 1px solid #2a3340; display: flex; align-items: center; padding-left: 3px; font-size: 16px; letter-spacing: .2px; color: #d6d9dc; }
.ws-text { margin-left: 3px; white-space: nowrap; }
.ws-dd { margin-left: auto; margin-right: 2px; border-left-width: 5px; border-right-width: 5px; }
.doc-title { width: 340px; flex: none; text-align: center; font-size: 16.500px; color: #7f8995; }
.search { width: 252px; height: 30px; flex: none; background: #2e3845; border: 1px solid #2a3340; padding-left: 3px; font-size: 15px; letter-spacing: .15px; line-height: 27px; font-style: italic; color: #8b95a1; white-space: nowrap; overflow: hidden; }
.login { width: 115px; flex: none; font-size: 16px; letter-spacing: .35px; color: #d0d4d8; white-space: nowrap; }
.help-q { font-size: 20px; font-weight: 700; fill: #5a6068; text-anchor: middle; }
.win-btns { margin-left: auto; display: flex; margin-right: 2px; }

/* ribbon tabs */
.tabrow { height: 30px; background: #1c2530; display: flex; align-items: flex-end; font-size: 16px; letter-spacing: .25px; }
.rtab { display: block; height: 25px; line-height: 24px; white-space: nowrap; color: #a9b0b7; flex: none; }
.rtab.active { margin-left: 7px; width: 87px; padding-left: 14px; background: #2f3944; color: #d8dbde; margin-right: 16px; }
.t87{width:87px}.t115{width:115px}.t158{width:158px}.t56{width:56px}.t122{width:122px}.t77{width:77px}.t121{width:121px}.t179{width:179px}.t289{width:289px}
.mini-btn { width: 21px; height: 12px; background: #e8e8e8; margin-bottom: 8px; display: flex; align-items: center; justify-content: center; flex: none; }
.mini-dd { margin: 0 0 11px 5px; }

/* ribbon */
.ribbon { height: 137px; padding-left: 5px; display: flex; gap: 2px; background: #1c2530; flex: none; }
.panel { background: #2f3944; display: flex; flex-direction: column; flex: none; }
.p-draw { width: 366px; } .p-edit { width: 185px; } .p-anno { width: 194px; } .p-layers { width: 380px; } .p-block { width: 117px; }
.pbody { height: 111px; flex: none; display: flex; padding-top: 6px; }
.p-draw .pbody { padding-left: 3px; }
.pfoot { flex: 1; display: flex; align-items: center; font-size: 16px; letter-spacing: .1px; color: #b9bfc5; white-space: nowrap; padding-bottom: 1px; }
.pfoot .dd { margin-left: 8px; border-left-width: 5px; border-right-width: 5px; }
.f-draw { padding-left: 131px; } .f-edit { padding-left: 21px; } .f-anno { padding-left: 44px; } .f-layers { padding-left: 159px; } .f-block { padding-left: 31px; }
.lg { display: flex; flex-direction: column; align-items: center; padding-top: 2px; flex: none; }
.ico48 { width: 64px; height: 48px; display: block; flex: none; }
.ico26 { width: 26px; height: 26px; display: block; }
.lbl { display: block; margin-top: 5px; height: 20px; line-height: 20px; font-size: 16px; letter-spacing: .15px; color: #c9ced3; white-space: nowrap; text-align: center; }
.lbl.two { line-height: 22px; height: 44px; margin-top: 4px; }
.lgdd { margin-top: 3px; }
.big-a { height: 48px; line-height: 46px; font-family: "Liberation Sans", sans-serif; font-size: 56px; color: #d6d8da; display: block; }
.scol { display: flex; flex-direction: column; flex: none; }
.srow { height: 33.500px; display: flex; align-items: center; }
.edit-grid { display: grid; grid-template-columns: 41px 43px 40px 7px 54px; grid-auto-rows: 33.500px; }
.e5 { justify-content: flex-start; padding-left: 16px; }
.layer-col { width: 291px; flex: none; padding-top: 3px; }
.layer-dd { height: 29px; margin-left: 1px; margin-bottom: 2px; width: 290px; background: #43536a; display: flex; align-items: center; padding-left: 7px; font-size: 15.500px; color: #c9ced3; }
.ldi { width: 18px; height: 24px; }
.ldi2 { width: 22px; height: 22px; margin-left: 6px; }
.ldi3 { width: 22px; height: 26px; margin-left: 5px; }
.swatch { width: 20px; height: 20px; margin-left: 6px; background: #fff; border: 2px solid #111; }
.ld-text { margin-left: 9px; }
.ld-arrow { margin-left: auto; margin-right: 3px; border-left-width: 5px; border-right-width: 5px; }
.lrow { display: flex; height: 33.500px; align-items: center; }
.cpanel { background: #3c4a5e; height: 137px; padding-top: 5px; display: flex; flex-direction: column; align-items: center; flex: none; }
.cdd { margin-top: auto; margin-bottom: 7px; border-left-width: 5px; border-right-width: 5px; }
.blank-panel { width: 219px; background: #2f373f; flex: none; }

/* doc tabs */
.doctabs { height: 38px; padding: 7px 0 0 32px; display: flex; gap: 2px; background: #1d2630; font-size: 16px; letter-spacing: .2px; flex: none; }
.dtab { height: 31px; display: flex; align-items: center; border-radius: 12px 12px 0 0; flex: none; }
.dtab.home { width: 173px; padding-left: 16px; background: #252f3a; color: #97a1ab; }
.dtab.cur { width: 174px; padding-left: 14px; background: #2f3944; color: #d0d4d8; }
.dx { margin-left: 57px; }
.dtab.plus { width: 30px; margin-left: 6px; background: #29333e; justify-content: center; border-radius: 7px 7px 0 0; }
.sep { height: 6px; background: #3b4652; flex: none; }

/* canvas */
.canvas {
  position: relative; height: 723px; flex: none; overflow: hidden; background-color: #000;
  background-image:
    linear-gradient(to right, #17191f 1px, transparent 1px),
    linear-gradient(to bottom, #17191f 1px, transparent 1px),
    linear-gradient(to right, #0a0b0f 1px, transparent 1px),
    linear-gradient(to bottom, #0a0b0f 1px, transparent 1px);
  background-size: 63px 62.700px, 63px 62.700px, 12.600px 12.540px, 12.600px 12.540px;
  background-position: 59px 1px, 59px 1px, 59px 1px, 59px 1px;
}
.draw { position: absolute; left: 0; top: 0; display: block; }
.vp-label { position: absolute; left: 7px; top: 9px; font-size: 17px; letter-spacing: .25px; color: #c8c8c8; white-space: nowrap; z-index: 1; }
.ln path { fill: none; stroke: #d8d8d8; stroke-width: 1.600; }
.tb path { fill: none; stroke: #c6c6c6; stroke-width: 1.500; }
.yl { fill: none; stroke: #dede3c; stroke-width: 1.600; }
.dim-text { font-family: "Liberation Sans", sans-serif; font-size: 54px; fill: #efefef; }
.ucs path { fill: none; stroke: #d4d4d4; stroke-width: 1.500; }
.vc-top { font-family: Roboto, sans-serif; font-size: 14px; fill: #4c4e54; }
.vc-dir { font-family: "Liberation Sans", sans-serif; font-size: 20px; fill: #a8a8a8; }
.ucs-text { font-family: "Liberation Sans", sans-serif; font-size: 14px; fill: #5e5e66; }
.photo { position: absolute; left: 2px; top: 172px; width: 457px; height: 373px; z-index: 1; }
.photo svg { display: block; }
.ph-head { font-family: "Liberation Sans", sans-serif; font-size: 51px; fill: #333; }
.ph-foot { font-family: "Liberation Sans", sans-serif; font-size: 37px; fill: #8d8d8d; }
.ph-thin path { fill: none; stroke: #8a8a8a; stroke-width: 2.500; }
.ph-thick path { fill: none; stroke: #141414; stroke-width: 5; }
.ph-num text { font-family: "Liberation Sans", sans-serif; font-style: italic; font-size: 46px; fill: #222; text-anchor: middle; }
.ph-small text { font-family: "Liberation Sans", sans-serif; font-style: italic; font-size: 27px; fill: #555; text-anchor: middle; }
.notes { position: absolute; left: 1216px; top: 147px; font-family: "Liberation Sans", sans-serif; font-size: 35.200px; line-height: 40px; color: #fff; white-space: nowrap; z-index: 1; }
.cmdline { position: absolute; left: 387px; top: 686px; width: 1135px; height: 37px; display: flex; z-index: 2; }
.cmd-tools { width: 79px; flex: none; background: #1f2a35; border-radius: 6px 0 0 0; display: flex; align-items: center; padding-left: 6px; gap: 7px; }
.wrench { margin-left: 9px; }
.grip { width: 6px; height: 30px; background: repeating-linear-gradient(to bottom, #9aa0a6 0 3px, transparent 3px 5px); }
.cmd-input { flex: 1; height: 35px; margin-top: 1px; background: #b0b0b0; border-radius: 2px; display: flex; align-items: center; padding-left: 4px; }
.cmd-dd { margin-left: 3px; border-left-width: 5px; border-right-width: 5px; border-top-color: #444; }
.cmd-ph { margin-left: 9px; font-family: "Liberation Mono", monospace; font-style: italic; font-size: 16px; letter-spacing: .2px; color: #5f6670; }
.cmd-up { margin-left: auto; margin-right: 5px; }

/* status */
.status { height: 40px; flex: none; display: flex; align-items: flex-start; padding-left: 17px; background: #1d2733; font-size: 16px; }
.ltab { height: 25px; display: flex; align-items: center; justify-content: center; flex: none; background: #29343f; color: #b4bac0; clip-path: polygon(0 0, 100% 0, 94% 100%, 6% 100%); }
.l-model { width: 100px; background: #37424f; color: #f0f0f0; font-weight: 700; }
.l-1 { width: 70px; margin-left: 2px; }
.l-2 { width: 69px; margin-left: 8px; }
.l-plus { width: 28px; margin-left: 13px; }
.st-right { margin-left: auto; margin-right: 5px; display: flex; gap: 3px; padding-top: 3px; }
.sg { height: 33px; display: flex; background: #323d4a; flex: none; }
.on { background: #5189c0; }
.ratio { font-size: 15px; font-weight: 700; color: #cfd3d7; }
```
